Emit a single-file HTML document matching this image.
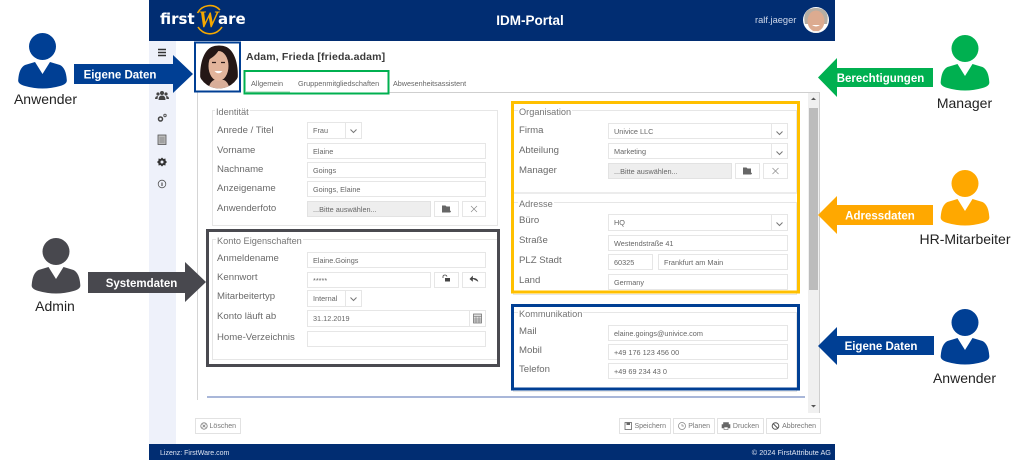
<!DOCTYPE html>
<html lang="de"><head><meta charset="utf-8"><title>IDM-Portal</title>
<style>
html,body{margin:0;padding:0;background:#fff}
#p{position:relative;width:1024px;height:460px;overflow:hidden;background:#fff;font-family:"Liberation Sans",sans-serif;filter:blur(.35px)}
#p div{position:absolute;box-sizing:border-box;white-space:nowrap}
.l{font-size:9.6px;color:#6a6a6a;line-height:12px;height:12px}
.g{font-size:9.2px;color:#757575;line-height:12px;height:12px;background:#fff;padding:0 1px}
.i{border:1px solid #e6e6e6;background:#fff;font-size:7.3px;color:#666;padding-left:5px;line-height:15px;height:16px}
.d{background:#eeeeee;border-color:#e2e2e2}
.a{border:1px solid #e6e6e6;background:#fff;height:16px}
.f{border:1px solid #e6e6e6;background:transparent}
.b{border:1px solid #e2e2e2;background:#fff;font-size:7px;color:#777;height:16px;line-height:16px;text-align:right;padding-right:4px}
svg{position:absolute;left:0;top:0}
</style></head><body><div id="p">
<div style="left:149px;top:0;width:686px;height:41px;background:#012d72"></div>
<div style="left:149px;top:41px;width:27px;height:403px;background:#eef1fa"></div>
<div style="left:149px;top:444px;width:686px;height:16px;background:#012d72"></div>
<div style="left:160px;top:449px;font-size:7px;line-height:10px;color:#dfe5f2">Lizenz: FirstWare.com</div>
<div style="right:193px;top:448px;font-size:7.3px;line-height:10px;color:#dfe5f2">© 2024 FirstAttribute AG</div>
<div style="left:160px;top:10px;font-family:'DejaVu Sans',sans-serif;font-size:15px;line-height:18px;font-weight:bold;color:#fff">first</div>
<div style="left:218px;top:10px;font-family:'DejaVu Sans',sans-serif;font-size:15px;line-height:18px;font-weight:bold;color:#fff">are</div>
<div style="left:198px;top:8px;font-family:'Liberation Serif',serif;font-style:italic;font-weight:bold;font-size:23px;line-height:24px;color:#f5a800">W</div>
<div style="left:430px;width:200px;top:13px;text-align:center;font-size:13.5px;line-height:16px;font-weight:bold;color:#fff">IDM-Portal</div>
<div style="left:755px;top:14px;font-size:9.3px;line-height:13px;color:#cfd8ea">ralf.jaeger</div>

<div style="left:246px;top:50px;font-size:10.5px;line-height:14px;font-weight:bold;color:#3a3a3a;letter-spacing:.15px">Adam, Frieda [frieda.adam]</div>
<div style="left:251px;top:78px;font-size:7.3px;line-height:11px;color:#666">Allgemein</div>
<div style="left:298px;top:78px;font-size:7.3px;line-height:11px;color:#666">Gruppenmitgliedschaften</div>
<div style="left:393px;top:78px;font-size:7.2px;line-height:11px;color:#666">Abwesenheitsassistent</div>
<div style="left:389px;top:92px;width:431px;height:1px;background:#cfcfcf"></div>
<div style="left:197px;top:92px;width:1px;height:308px;background:#d5d5d5"></div>
<div style="left:819px;top:93px;width:1px;height:320px;background:#cfcfcf"></div>
<div style="left:808px;top:93px;width:11px;height:320px;background:#f0f0f0"></div>
<div style="left:809px;top:108px;width:9px;height:182px;background:#bcbcbc"></div>
<div style="left:207px;top:396px;width:598px;height:2px;background:#a9b7d9"></div>

<!-- Identität -->
<div class="f" style="left:212px;top:110px;width:286px;height:116px"></div>
<div class="g" style="left:215px;top:106px">Identität</div>
<div class="l" style="left:217px;top:125px">Anrede / Titel</div>
<div class="l" style="left:217px;top:145px">Vorname</div>
<div class="l" style="left:217px;top:164px">Nachname</div>
<div class="l" style="left:217px;top:183px">Anzeigename</div>
<div class="l" style="left:217px;top:203px">Anwenderfoto</div>
<div class="i" style="left:307px;top:122px;width:39px;height:17px;line-height:16px">Frau</div><div class="a" style="left:345px;top:122px;width:17px;height:17px"></div>
<div class="i" style="left:307px;top:143px;width:179px">Elaine</div>
<div class="i" style="left:307px;top:162px;width:179px">Goings</div>
<div class="i" style="left:307px;top:181px;width:179px">Goings, Elaine</div>
<div class="i d" style="left:307px;top:201px;width:124px">...Bitte auswählen...</div>
<div class="a" style="left:434px;top:201px;width:25px"></div><div class="a" style="left:462px;top:201px;width:24px"></div>

<!-- Konto -->
<div class="f" style="left:212px;top:239px;width:286px;height:121px"></div>
<div class="g" style="left:216px;top:235px">Konto Eigenschaften</div>
<div class="l" style="left:217px;top:253px">Anmeldename</div>
<div class="l" style="left:217px;top:272px">Kennwort</div>
<div class="l" style="left:217px;top:291px">Mitarbeitertyp</div>
<div class="l" style="left:217px;top:311px">Konto läuft ab</div>
<div class="l" style="left:217px;top:332px">Home-Verzeichnis</div>
<div class="i" style="left:307px;top:252px;width:179px">Elaine.Goings</div>
<div class="i" style="left:307px;top:272px;width:124px">*****</div>
<div class="a" style="left:434px;top:272px;width:25px"></div><div class="a" style="left:462px;top:272px;width:24px"></div>
<div class="i" style="left:307px;top:290px;width:39px;height:17px;line-height:16px">Internal</div><div class="a" style="left:345px;top:290px;width:17px;height:17px"></div>
<div class="i" style="left:307px;top:310px;width:163px;height:17px;line-height:16px">31.12.2019</div><div class="a" style="left:469px;top:310px;width:17px;height:17px"></div>
<div class="i" style="left:307px;top:331px;width:179px"></div>

<!-- Organisation -->
<div class="f" style="left:513px;top:110px;width:284px;height:84px;border-bottom:2px solid #ececec"></div>
<div class="g" style="left:518px;top:106px">Organisation</div>
<div class="l" style="left:519px;top:125px">Firma</div>
<div class="l" style="left:519px;top:145px">Abteilung</div>
<div class="l" style="left:519px;top:165px">Manager</div>
<div class="i" style="left:608px;top:123px;width:164px">Univice LLC</div><div class="a" style="left:771px;top:123px;width:17px"></div>
<div class="i" style="left:608px;top:143px;width:164px">Marketing</div><div class="a" style="left:771px;top:143px;width:17px"></div>
<div class="i d" style="left:608px;top:163px;width:124px">...Bitte auswählen...</div>
<div class="a" style="left:735px;top:163px;width:25px"></div><div class="a d" style="left:763px;top:163px;width:25px"></div>

<!-- Adresse -->
<div class="f" style="left:513px;top:202px;width:284px;height:93px"></div>
<div class="g" style="left:518px;top:198px">Adresse</div>
<div class="l" style="left:519px;top:215px">Büro</div>
<div class="l" style="left:519px;top:235px">Straße</div>
<div class="l" style="left:519px;top:255px">PLZ Stadt</div>
<div class="l" style="left:519px;top:275px">Land</div>
<div class="i" style="left:608px;top:214px;width:164px;height:17px;line-height:16px">HQ</div><div class="a" style="left:771px;top:214px;width:17px;height:17px"></div>
<div class="i" style="left:608px;top:235px;width:180px">Westendstraße 41</div>
<div class="i" style="left:608px;top:254px;width:45px">60325</div>
<div class="i" style="left:658px;top:254px;width:130px">Frankfurt am Main</div>
<div class="i" style="left:608px;top:274px;width:180px">Germany</div>

<!-- Kommunikation -->
<div class="f" style="left:513px;top:312px;width:284px;height:80px"></div>
<div class="g" style="left:518px;top:308px">Kommunikation</div>
<div class="l" style="left:519px;top:326px">Mail</div>
<div class="l" style="left:519px;top:345px">Mobil</div>
<div class="l" style="left:519px;top:364px">Telefon</div>
<div class="i" style="left:608px;top:325px;width:180px">elaine.goings@univice.com</div>
<div class="i" style="left:608px;top:344px;width:180px">+49 176 123 456 00</div>
<div class="i" style="left:608px;top:363px;width:180px">+49 69 234 43 0</div>

<!-- Buttons -->
<div class="b" style="left:195px;top:418px;width:46px">Löschen</div>
<div class="b" style="left:619px;top:418px;width:52px">Speichern</div>
<div class="b" style="left:673px;top:418px;width:42px">Planen</div>
<div class="b" style="left:717px;top:418px;width:47px">Drucken</div>
<div class="b" style="left:766px;top:418px;width:55px">Abbrechen</div>

<svg width="1024" height="460" viewBox="0 0 1024 460" font-family="Liberation Sans, sans-serif">
<defs>
<g id="u"><circle cx="0" cy="13.5" r="13.5"/><path d="M-7.5 29L0 41L7.5 29L17.5 32Q23.5 35 24.3 47Q24.8 51 17.5 53Q0 58-17.5 53Q-24.8 51-24.3 47Q-23.5 35-17.5 32Z"/></g>
<path id="ch" d="M-3-1.5L0 1.5L3-1.5" fill="none" stroke="#777" stroke-width="1"/>
<g id="fo"><path d="M-4-3.5H-.5L.5-2.5H4V3.5H-4Z" fill="#666"/><path d="M3 2.5H5M4 1.5V3.5" stroke="#666" stroke-width=".7"/></g>
<path id="xx" d="M-3-3L3 3M3-3L-3 3" stroke="#888" stroke-width=".7"/>
<clipPath id="c1"><circle cx="816" cy="20" r="13"/></clipPath>
<clipPath id="c2"><circle cx="219" cy="67" r="21.500"/></clipPath>
</defs>

<!-- logo arcs -->
<path d="M197.500 13A14 14 0 0 1 220 10" fill="none" stroke="#f5a800" stroke-width="1.6"/>
<path d="M198 27A14 14 0 0 0 222 27" fill="none" stroke="#f5a800" stroke-width="1.6"/>

<!-- avatar ralf -->
<circle cx="816" cy="20" r="13" fill="#fff"/>
<g clip-path="url(#c1)">
<path d="M805 24C802 11 809 8 816 8C823 8 830 11 827 24Z" fill="#b5aea4"/>
<ellipse cx="816" cy="21" rx="8.500" ry="10.500" fill="#dcab90"/>
<path d="M812 25Q816 28 820 25Z" fill="#fff"/>
<path d="M804 35Q816 27 828 35Z" fill="#f2f2f2"/>
</g>

<!-- photo -->
<g clip-path="url(#c2)">
<rect x="197" y="45" width="44" height="45" fill="#fff"/>
<path d="M201 86C198 66 203 45 219 45C235 45 240 66 237 86C228 92 210 92 201 86Z" fill="#241716"/>
<path d="M208 92Q209 82 214 80H224Q229 82 230 92Z" fill="#d8ae99"/>
<ellipse cx="218.500" cy="66" rx="10" ry="15" fill="#e2b49b"/>
<path d="M208 60C210 52 214 50 219 50C216 55 212 58 208 60Z" fill="#241716"/>
<path d="M212 62.500H216M221 62.500H225" stroke="#2b1a18" stroke-width="1.300"/>
<path d="M214.500 71Q218.500 75.500 222.500 71Z" fill="#fff"/>
</g>

<!-- sidebar icons -->
<path d="M158 49.500H166M158 52.500H166M158 55.500H166" stroke="#333" stroke-width="1.6"/>
<g fill="#444"><circle cx="162" cy="93" r="2"/><circle cx="158" cy="94" r="1.600"/><circle cx="166" cy="94" r="1.600"/><path d="M158.500 100Q158.500 95.500 162 95.500Q165.500 95.500 165.500 100Z"/><path d="M155 99Q155 96 158 96L157.500 99ZM169 99Q169 96 166 96L166.500 99Z"/></g>
<circle cx="160.500" cy="119" r="2" fill="none" stroke="#444" stroke-width="1.500"/><circle cx="165" cy="115.500" r="1.200" fill="none" stroke="#555" stroke-width="1"/>
<rect x="158" y="135" width="8" height="9.500" fill="#bbb" stroke="#555" stroke-width=".8"/><path d="M159.500 138H164.500M159.500 140H164.500M159.500 142H164.500" stroke="#555" stroke-width=".6"/>
<path d="M162 157.500L163.500 159L165.500 158.500L165.500 160.500L167 162L165.500 163.500L165.500 165.500L163.500 165L162 166.500L160.500 165L158.500 165.500L158.500 163.500L157 162L158.500 160.500L158.500 158.500L160.500 159Z" fill="#333"/><circle cx="162" cy="162" r="1.500" fill="#eef1fa"/>
<circle cx="162" cy="184" r="3.800" fill="none" stroke="#555" stroke-width=".8"/><path d="M162 182.500V186" stroke="#555" stroke-width="1.200"/>

<!-- tab underline -->
<path d="M246 92H290" stroke="#8fd0a6" stroke-width="1"/>

<!-- scrollbar arrows -->
<path d="M811 100L813.500 97.500L816 100Z" fill="#555"/><path d="M811 405L813.500 407.500L816 405Z" fill="#555"/>

<!-- chevrons -->
<use href="#ch" x="353.500" y="131"/><use href="#ch" x="353.500" y="299"/>
<use href="#ch" x="779.500" y="133"/><use href="#ch" x="779.500" y="153"/><use href="#ch" x="779.500" y="224"/>
<!-- small icons -->
<use href="#fo" x="446" y="209"/><use href="#xx" x="474" y="209"/>
<use href="#fo" x="747" y="171"/><use href="#xx" x="775.500" y="171"/>
<path d="M443 278V276.500Q443 275 445 275Q446.500 275 447 276.500" fill="none" stroke="#444" stroke-width=".8"/><rect x="445" y="278" width="5" height="3.500" fill="#444"/>
<path d="M470 279L472.500 276.500V281ZM472 278.500Q476.500 277.500 478 281.500" fill="#444" stroke="#444" stroke-width=".7"/>
<rect x="473.500" y="314" width="8" height="9" fill="#ddd" stroke="#666" stroke-width=".7"/><path d="M473.500 316.500H481.500M476 316.500V323M479 316.500V323M473.500 319H481.500M473.500 321H481.500" stroke="#666" stroke-width=".5"/>
<!-- button icons -->
<circle cx="204" cy="426" r="3.200" fill="none" stroke="#777" stroke-width=".8"/><path d="M202.500 424.500L205.500 427.500M205.500 424.500L202.500 427.500" stroke="#777" stroke-width=".8"/>
<rect x="625" y="422.500" width="6.500" height="7" fill="none" stroke="#666" stroke-width=".8"/><rect x="626.500" y="422.500" width="3.500" height="2.500" fill="#666"/>
<circle cx="682" cy="426" r="3.500" fill="none" stroke="#888" stroke-width=".8"/><path d="M682 424V426H684" fill="none" stroke="#888" stroke-width=".7"/>
<path d="M723.500 424.500V422.500H728.500V424.500M723.500 428H722V424.500H730V428H728.500" fill="#666" stroke="#666" stroke-width=".6"/><rect x="724" y="427" width="4" height="2.500" fill="#fff" stroke="#666" stroke-width=".6"/>
<circle cx="775.500" cy="426" r="3.300" fill="none" stroke="#555" stroke-width="1"/><path d="M773 423.500L778 428.500" stroke="#555" stroke-width="1"/>

<!-- highlight boxes -->
<rect x="195" y="42.500" width="45" height="49" fill="none" stroke="#003f94" stroke-width="2"/>
<rect x="244.500" y="71" width="144" height="22.500" fill="none" stroke="#00b050" stroke-width="2"/>
<rect x="207.500" y="230.500" width="291" height="135" fill="none" stroke="#4a4a50" stroke-width="3"/>
<rect x="512.500" y="102.500" width="286" height="189.500" fill="none" stroke="#ffc000" stroke-width="3"/>
<rect x="512.500" y="305.500" width="286" height="83.500" fill="none" stroke="#003f94" stroke-width="3"/>

<!-- arrows -->
<path d="M74 64H173V55L193 74L173 93V84H74Z" fill="#003f94"/>
<path d="M88 272H185V262L206 282L185 302V293H88Z" fill="#48484e"/>
<path d="M818 77.500L837 58V68H933V87H837V97Z" fill="#00b050"/>
<path d="M818 215L837 196V205H933V225H837V234Z" fill="#ffa800"/>
<path d="M818 346L837 327V336H934V355H837V365Z" fill="#003f94"/>
<g font-size="11.500" font-weight="bold" fill="#fff" text-anchor="middle">
<text x="120" y="78.500">Eigene Daten</text>
<text x="141.500" y="287">Systemdaten</text>
<text x="880.500" y="82">Berechtigungen</text>
<text x="880" y="219.500">Adressdaten</text>
<text x="881" y="350">Eigene Daten</text>
</g>

<!-- people -->
<use href="#u" x="42.500" y="33" fill="#003f94"/>
<use href="#u" x="56" y="238" fill="#48484e"/>
<use href="#u" x="965" y="35" fill="#00b050"/>
<use href="#u" x="965" y="170" fill="#ffa800"/>
<use href="#u" x="965" y="309" fill="#003f94"/>
<g font-size="14" fill="#222" text-anchor="middle">
<text x="45.500" y="104">Anwender</text>
<text x="55" y="311">Admin</text>
<text x="964.500" y="108">Manager</text>
<text x="965" y="244">HR-Mitarbeiter</text>
<text x="964.500" y="383">Anwender</text>
</g>
</svg>
</div></body></html>
